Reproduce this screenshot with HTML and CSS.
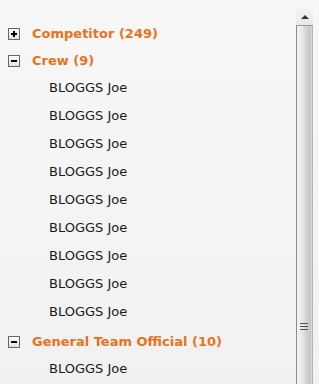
FILE: index.html
```html
<!DOCTYPE html>
<html lang="en">
<head>
  <meta charset="UTF-8" />
  <title>Team List</title>
  <link rel="stylesheet" href="styles.css">
</head>
<body>

  <div class="panel">
    <div class="tree">
      <div class="group">
        <div class="group-head">
          <span class="toggle plus"></span>
          <span class="group-name">Competitor (249)</span>
        </div>
      </div>

      <div class="group open">
        <div class="group-head">
          <span class="toggle"></span>
          <span class="group-name">Crew (9)</span>
        </div>
        <ul class="members">
          <li>BLOGGS Joe</li>
          <li>BLOGGS Joe</li>
          <li>BLOGGS Joe</li>
          <li>BLOGGS Joe</li>
          <li>BLOGGS Joe</li>
          <li>BLOGGS Joe</li>
          <li>BLOGGS Joe</li>
          <li>BLOGGS Joe</li>
          <li>BLOGGS Joe</li>
        </ul>
      </div>

      <div class="group open">
        <div class="group-head">
          <span class="toggle"></span>
          <span class="group-name">General Team Official (10)</span>
        </div>
        <ul class="members">
          <li>BLOGGS Joe</li>
        </ul>
      </div>
    </div>

    <!-- fake scrollbar -->
    <div class="scrollbar">
      <div class="scroll-up"><span class="arrow"></span></div>
      <div class="thumb">
        <div class="grip"><i></i><i></i><i></i></div>
      </div>
    </div>
  </div>

</body>
</html>
```

FILE: styles.css
```css
/* Base */
body {
  margin: 0;
  font-family: 'DejaVu Sans', Verdana, sans-serif;
  font-size: 13px;
  color: #1a1a1a;
  background: linear-gradient(to bottom, #f7f7f7, #f1f1f1);
  height: 384px;
  overflow: hidden;
}
.panel {
  display: flex;
  height: 384px;
}

/* Tree */
.tree {
  flex: 1;
  padding-top: 20px;
}
.group.open {
  margin-bottom: 2px;
}
.group-head {
  display: flex;
  align-items: center;
  height: 27px;
  padding-left: 8px;
}
.toggle {
  box-sizing: border-box;
  width: 12px;
  height: 12px;
  border: 1px solid #666;
  background: linear-gradient(#ffffff, #e2e2e2);
  position: relative;
  margin-right: 12px;
}
.toggle::before,
.plus::after {
  content: "";
  position: absolute;
  background: #000;
}
.toggle::before {
  left: 2px;
  top: 4px;
  width: 6px;
  height: 2px;
}
.plus::after {
  left: 4px;
  top: 2px;
  width: 2px;
  height: 6px;
}
.group-name {
  font-weight: bold;
  color: #e8731c;
}
.members {
  list-style: none;
  margin: 0;
  padding: 0;
}
.members li {
  height: 28px;
  line-height: 28px;
  padding-left: 49px;
}

/* Scrollbar */
.scrollbar {
  width: 17px;
  margin: 7px 6px 0 0;
  display: flex;
  flex-direction: column;
}
.scroll-up {
  height: 18px;
  background: linear-gradient(#f6f6f6, #e8e8e8);
  display: flex;
  align-items: center;
  justify-content: center;
}
.arrow {
  width: 0;
  height: 0;
  border-left: 4px solid transparent;
  border-right: 4px solid transparent;
  border-bottom: 4px solid #333;
  margin-top: 1px;
}
.thumb {
  flex: 1;
  box-sizing: border-box;
  border-left: 1px solid #8a8a8a;
  border-right: 1px solid #b5b5b5;
  border-top: 1px solid #9a9a9a;
  background: linear-gradient(to right, #f4f4f4, #e6e6e6 35%, #d0d0d0 65%, #c6c6c6 90%, #e0e0e0);
  position: relative;
}
.grip {
  position: absolute;
  top: 297px;
  left: 3px;
  width: 8px;
}
.grip i {
  display: block;
  height: 1px;
  background: #555;
  margin-bottom: 2px;
}
```
